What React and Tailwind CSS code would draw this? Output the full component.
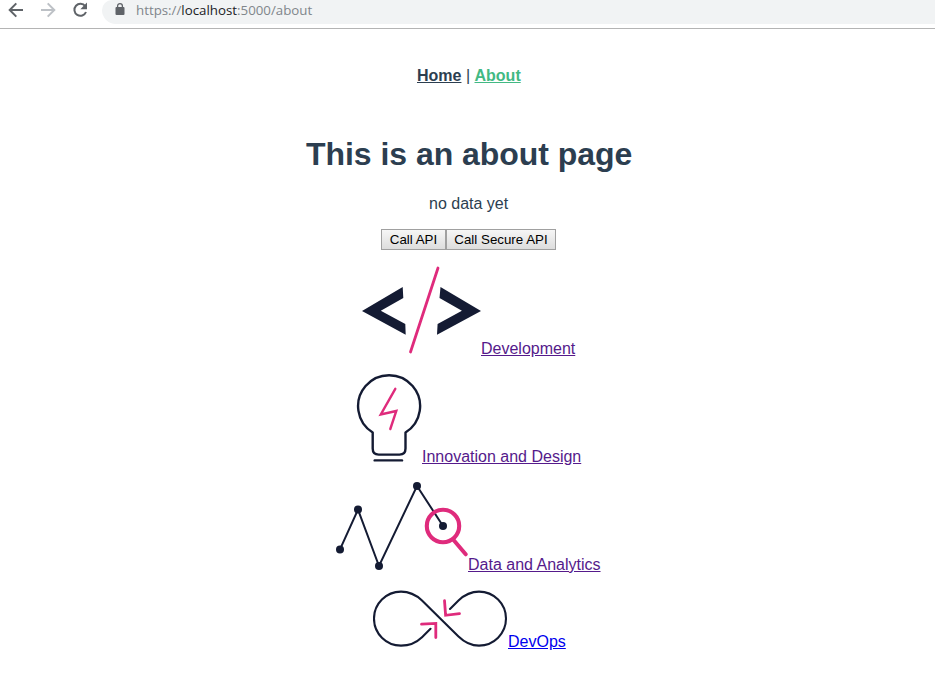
import React from "react";

function BrowserBar() {
  return (
    <header className="flex h-[29px] items-start border-b border-[#b4b4b4] bg-white">
      <svg className="h-6 w-[102px] shrink-0" viewBox="0 0 102 24" fill="none" strokeWidth="2">
        <path d="M23 10H10M16.3 3.4 9.7 10l6.6 6.6" stroke="#5f6368" />
        <path d="M41 10h13M47.7 3.4l6.6 6.6-6.6 6.6" stroke="#bdc1c6" />
        <path d="M85.2 6.2A6 6 0 1 0 86 12" stroke="#5f6368" />
        <path d="M87 2.5v6.7h-6.7z" fill="#5f6368" />
      </svg>
      <div className="flex h-6 flex-1 items-start rounded-bl-[14px] rounded-tl-[10px] bg-[#f1f3f4] pl-[13px]">
        <svg className="h-5 w-[10px] shrink-0" viewBox="115 0 10 20" fill="none">
          <rect x="115.5" y="7" width="9" height="8" rx="1" fill="#5f6368" />
          <path d="M117.6 7.5V6a2.4 2.4 0 0 1 4.8 0v1.5" stroke="#5f6368" strokeWidth="1.3" />
        </svg>
        <span className="ml-[11px] whitespace-nowrap font-['Open_Sans',sans-serif] text-[13.3px] leading-[21px] text-[#80868b]">
          https://<span className="text-[#202124]">localhost</span>:5000/about
        </span>
      </div>
    </header>
  );
}

function CodeIcon() {
  return (
    <svg className="h-[100px] w-[119px] shrink-0" viewBox="362 258 119 100" fill="#141b33">
      <path d="M402.7 287 362 311l43.7 23.8-.4-10.7-24.5-13.3 22.5-12.8z" />
      <path d="M440.5 287 481 311l-44 23.8.6-10.7 24.3-13.3-22.4-12.8z" />
      <path d="M438 268 410.5 352" stroke="#df2b7c" strokeWidth="2.8" strokeLinecap="round" />
    </svg>
  );
}

function BulbIcon() {
  return (
    <svg className="h-[100px] w-[66px] shrink-0" viewBox="356 366 66 100" fill="none" stroke="#141b33" strokeWidth="2.4" strokeLinecap="round">
      <path d="M372.7 432.5A31 31 0 1 1 405.5 432.5V448.5Q405.5 454.6 399.5 454.6H378.7Q372.7 454.6 372.7 448.5Z" strokeLinejoin="round" />
      <path d="M374.7 460.4H402" />
      <path d="M395.3 388.8 380.8 414.5 396.3 411 390.3 429" stroke="#df2b7c" strokeLinejoin="miter" />
    </svg>
  );
}

function ChartIcon() {
  return (
    <svg className="h-[100px] w-[132px] shrink-0" viewBox="336 474 132 100" fill="none">
      <path d="M340 549.4 358 509.6 379 566 417 486 443 526" stroke="#141b33" strokeWidth="2" />
      <g fill="#141b33">
        <circle cx="340" cy="549.4" r="4" />
        <circle cx="358" cy="509.6" r="4" />
        <circle cx="379" cy="566" r="4" />
        <circle cx="417" cy="486" r="4" />
        <circle cx="443" cy="526" r="4" />
      </g>
      <circle cx="443" cy="526" r="16.2" stroke="#df2b7c" strokeWidth="4.1" />
      <path d="M454 540.5 465.7 554.3" stroke="#df2b7c" strokeWidth="4" strokeLinecap="round" />
    </svg>
  );
}

function InfinityIcon() {
  return (
    <svg className="h-[69px] w-[135px] shrink-0" viewBox="373 582 135 69" fill="none" stroke="#141b33" strokeWidth="2.1" strokeLinecap="round">
      <path d="M430.5 628.8 422 637.2C416 643 409.5 645.6 401 645.6A27 27 0 0 1 401 591.6C409.5 591.6 416 594.8 422 600.4L458.5 636.4C464.5 642.2 471 645.6 479 645.6A27 27 0 0 0 479 591.6C471 591.6 464.5 594.8 458.5 600.4L450 609" />
      <path d="M444.5 600.7 445.6 615.3 459.5 613.6M421.5 624.2 435.8 623.4V637.5" stroke="#df2b7c" strokeWidth="2.8" />
    </svg>
  );
}

export default function App() {
  return (
    <div className="h-[688px] w-[935px] overflow-hidden bg-white font-['Liberation_Sans',Arial,sans-serif] text-base text-[#2c3e50]">
      <BrowserBar />
      <main className="flex flex-col">
        <nav className="mt-[38px] pl-[417px] font-bold leading-[18px]">
          <a className="underline">Home</a>
          <span className="font-normal"> | </span>
          <a className="text-[#42b983] underline">About</a>
        </nav>
        <h1 className="mt-[51px] pl-[306px] text-[32px] font-bold leading-9 tracking-[-0.04px]">This is an about page</h1>
        <p className="mt-[23px] pl-[429px] leading-[18px]">no data yet</p>
        <div className="mt-[16px] flex pl-[381px] text-[13.333px] leading-[15px] text-black">
          <button className="h-[21px] w-[65px] whitespace-nowrap border border-[#a0a0a0] bg-linear-to-b from-[#f6f6f6] to-[#dddddd]">Call API</button>
          <button className="h-[21px] w-[110px] whitespace-nowrap border border-[#a0a0a0] bg-linear-to-b from-[#f6f6f6] to-[#dddddd]">Call Secure API</button>
        </div>
        <ul className="mt-2 flex flex-col gap-2 leading-[18px] text-[#551a8b]">
          <li className="flex items-end pl-[362px]"><CodeIcon /><a className="underline">Development</a></li>
          <li className="flex items-end pl-[356px]"><BulbIcon /><a className="underline">Innovation and Design</a></li>
          <li className="flex items-end pl-[336px]"><ChartIcon /><a className="underline">Data and Analytics</a></li>
          <li className="flex items-end pl-[373px] text-[#0000ee]"><InfinityIcon /><a className="underline">DevOps</a></li>
        </ul>
      </main>
    </div>
  );
}
